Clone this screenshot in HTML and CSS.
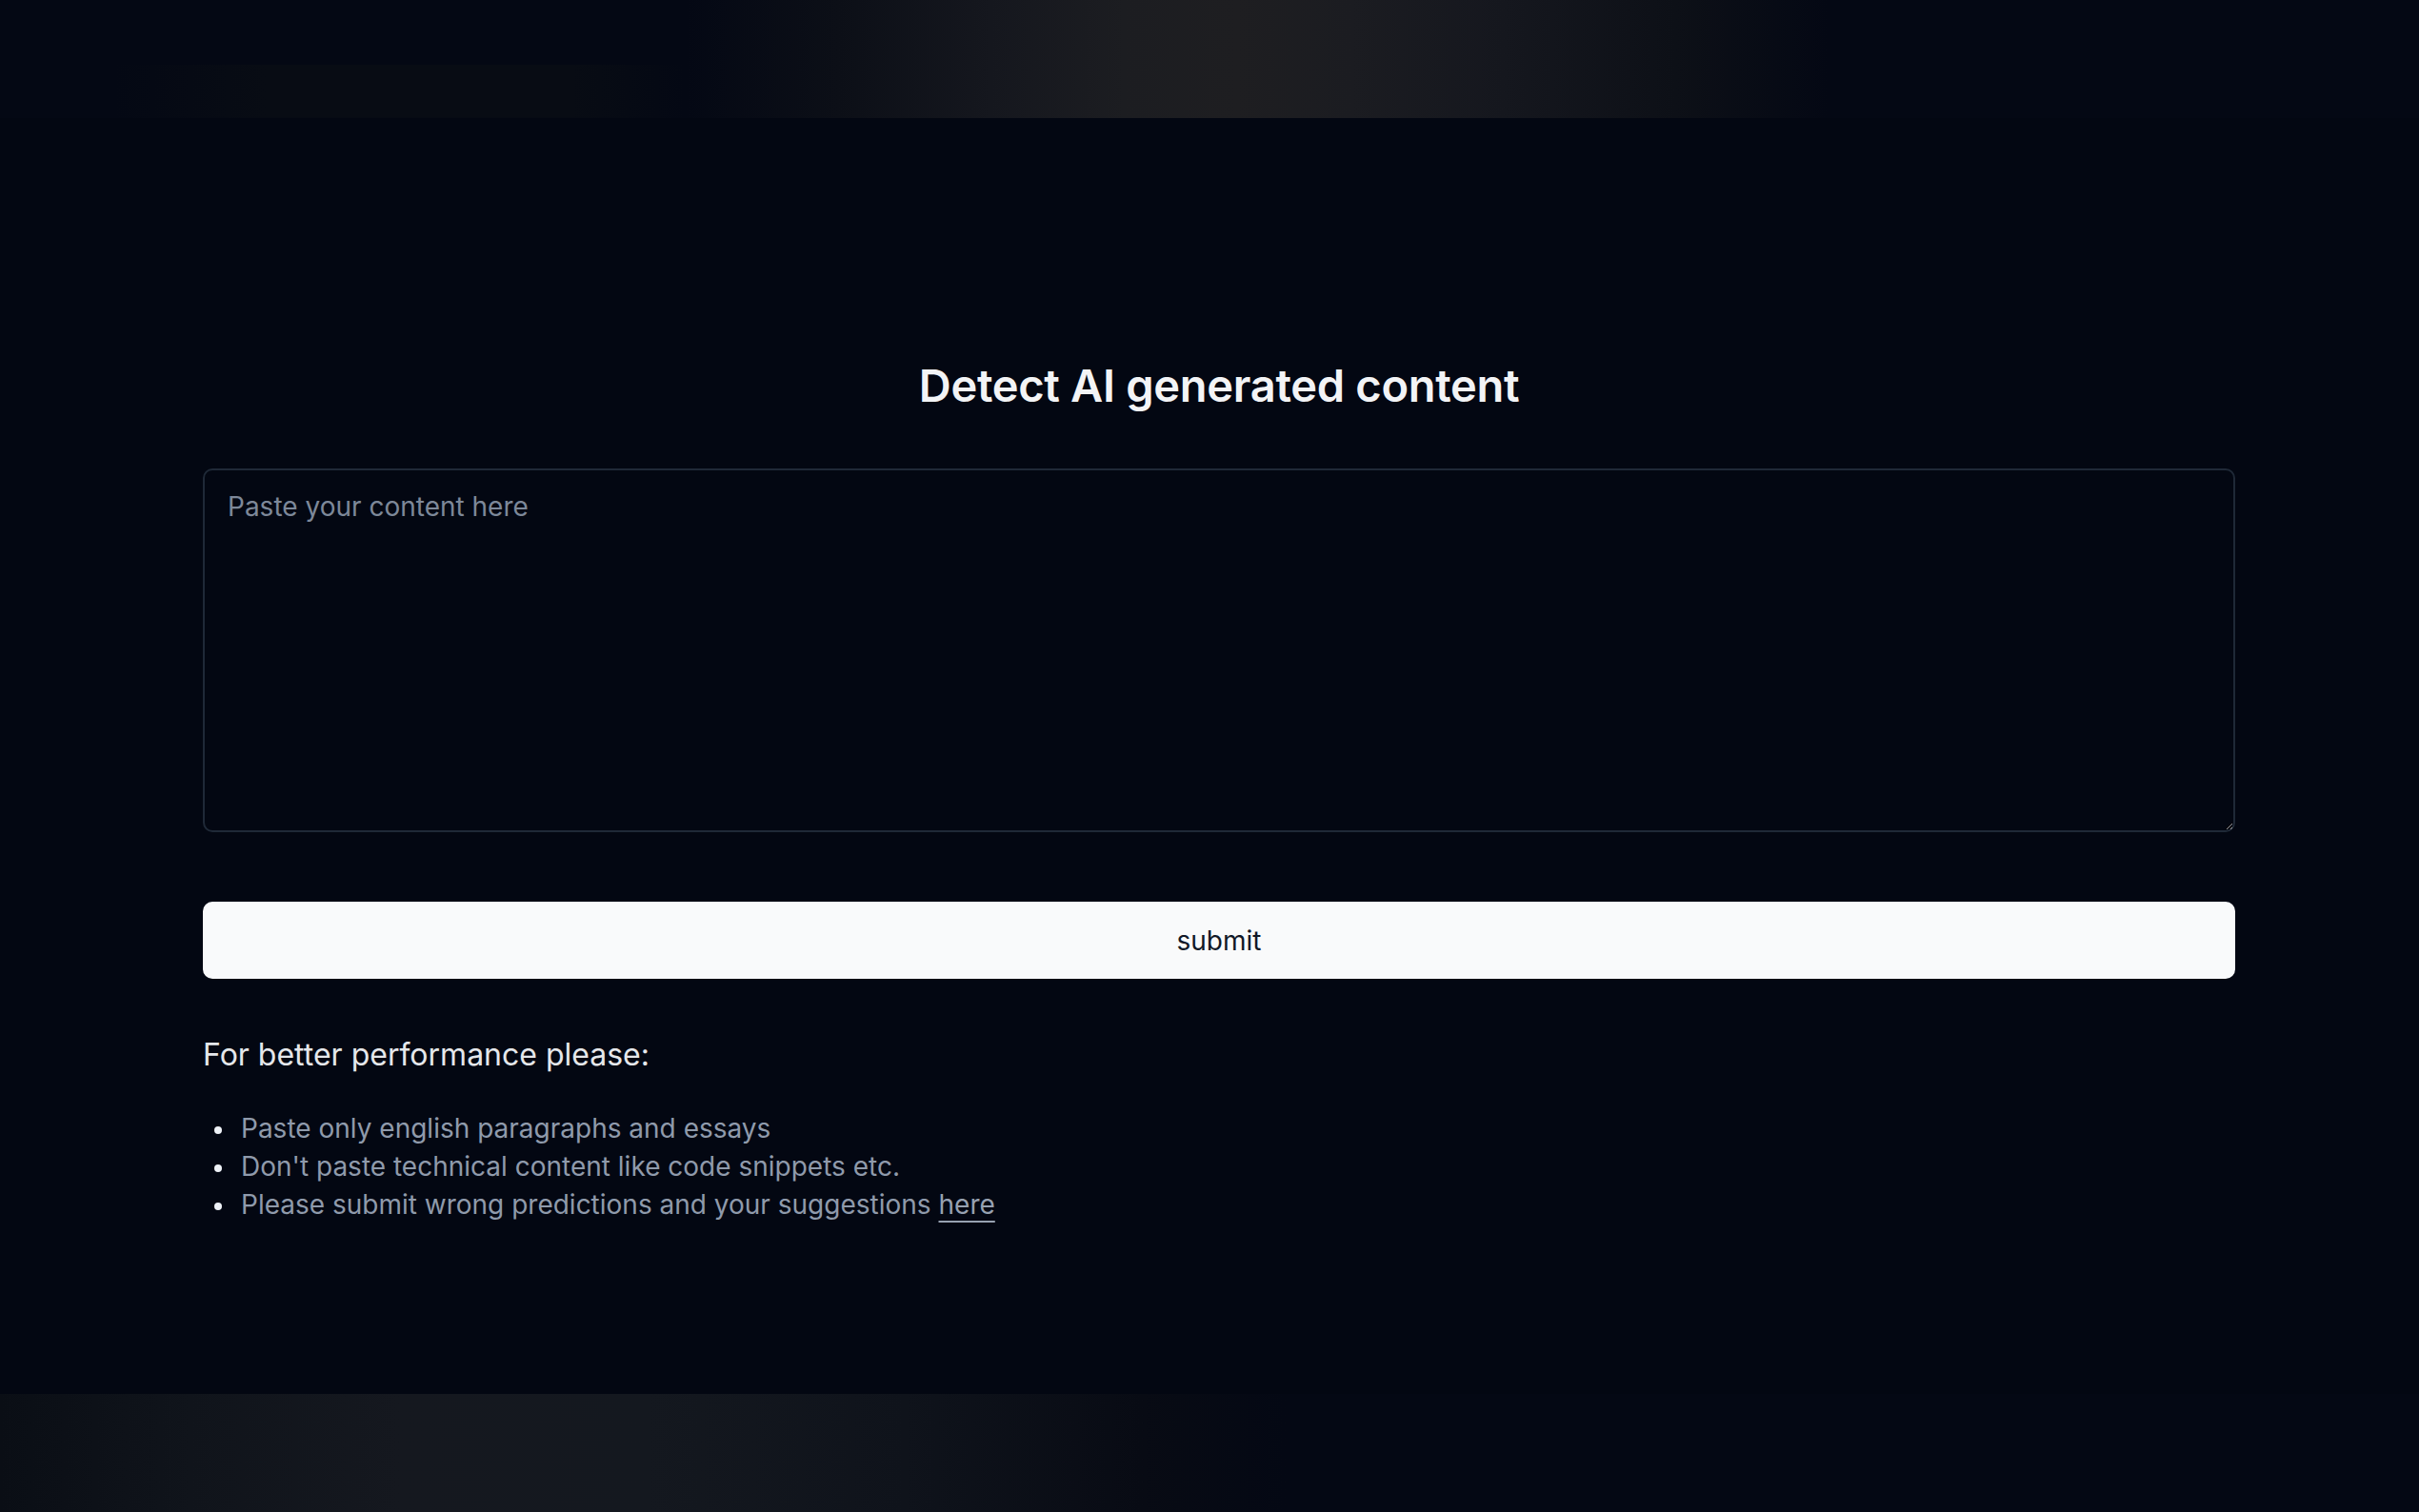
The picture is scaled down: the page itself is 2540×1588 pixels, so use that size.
FILE: index.html
```html
<!DOCTYPE html>
<html lang="en">
<head>
<meta charset="utf-8">
<title>Detect AI generated content</title>
<link rel="stylesheet" href="styles.css">
</head>
<body>
<div class="page">
  <div class="glow-top"></div>
  <main class="main">
    <div class="container">
      <h1 class="title">Detect AI generated content</h1>
      <textarea class="input" placeholder="Paste your content here"></textarea>
      <button class="submit" type="button">submit</button>
      <h2 class="tips-title">For better performance please:</h2>
      <ul class="tips">
        <li>Paste only english paragraphs and essays</li>
        <li>Don't paste technical content like code snippets etc.</li>
        <li>Please submit wrong predictions and your suggestions <a class="link" href="#">here</a></li>
      </ul>
    </div>
  </main>
  <div class="glow-bottom"></div>
</div>
</body>
</html>
```

FILE: styles.css
```css
* { box-sizing: border-box; }

html, body {
  margin: 0;
  padding: 0;
  background: #030712;
}

body {
  font-family: Inter, "Noto Sans", "Liberation Sans", sans-serif;
  color: #f9fafb;
}

.page {
  min-height: 100vh;
  display: flex;
  flex-direction: column;
}

.glow-top {
  height: 124px;
  flex: none;
  background:
    linear-gradient(90deg,
      rgba(3,7,18,0) 0px,
      rgba(3,7,18,0) 720px,
      rgba(12,15,23,1) 880px,
      rgba(21,23,30,1) 1040px,
      rgba(28,29,33,1) 1180px,
      rgba(30,30,33,1) 1300px,
      rgba(27,28,33,1) 1420px,
      rgba(21,23,30,1) 1580px,
      rgba(13,16,23,1) 1760px,
      rgba(3,7,18,0) 1920px),
    linear-gradient(90deg,
      rgba(3,7,18,0) 120px,
      rgba(8,12,20,1) 280px,
      rgba(8,12,20,1) 600px,
      rgba(3,7,18,0) 720px) bottom / 100% 45% no-repeat,
    #040814;
}

.glow-bottom {
  height: 124px;
  flex: none;
  background:
    linear-gradient(90deg,
      rgba(10,14,21,1) 0px,
      rgba(16,20,27,1) 200px,
      rgba(21,24,31,1) 420px,
      rgba(20,24,31,1) 680px,
      rgba(15,19,27,1) 950px,
      rgba(8,11,20,1) 1200px,
      rgba(3,7,18,0) 1350px),
    #040814;
}

.main {
  flex: 1;
  display: flex;
  flex-direction: column;
  padding: 0 193px 0 213px;
}

.container {
  width: 100%;
  padding-top: 252px;
  display: flex;
  flex-direction: column;
}

.title {
  margin: 0;
  font-size: 47px;
  line-height: 58px;
  font-weight: 600;
  text-align: center;
  color: #f3f4f6;
  letter-spacing: -0.3px;
}

.input {
  display: block;
  margin-top: 58px;
  width: 100%;
  height: 382px;
  padding: 19px 24px 16px;
  background: transparent;
  border: 2px solid #1f2937;
  border-radius: 10px;
  font-family: Inter, "Noto Sans", "Liberation Sans", sans-serif;
  font-size: 28px;
  line-height: 39px;
  color: #f9fafb;
  resize: vertical;
  outline: none;
}

.input::placeholder {
  color: #7d8899;
}

.submit {
  display: block;
  margin-top: 73px;
  width: 100%;
  height: 81px;
  border: none;
  border-radius: 10px;
  background: #f9fafb;
  color: #111827;
  font-family: Inter, "Noto Sans", "Liberation Sans", sans-serif;
  font-size: 28px;
  font-weight: 400;
  cursor: pointer;
}

.tips-title {
  margin: 57px 0 0;
  font-size: 32px;
  line-height: 45px;
  font-weight: 400;
  color: #e5e7eb;
}

.tips {
  margin: 35px 0 0;
  padding: 0 0 0 12px;
  list-style: none;
  font-size: 28px;
  line-height: 40px;
  color: #8f9aab;
}

.tips li::before {
  content: "";
  display: inline-block;
  width: 8px;
  height: 8px;
  border-radius: 50%;
  background: #eef2f7;
  margin-right: 20px;
  vertical-align: 4px;
}

.link {
  color: #97a1b1;
  font-weight: 400;
  text-decoration: underline;
  text-underline-offset: 7px;
  text-decoration-thickness: 2px;
}
```
